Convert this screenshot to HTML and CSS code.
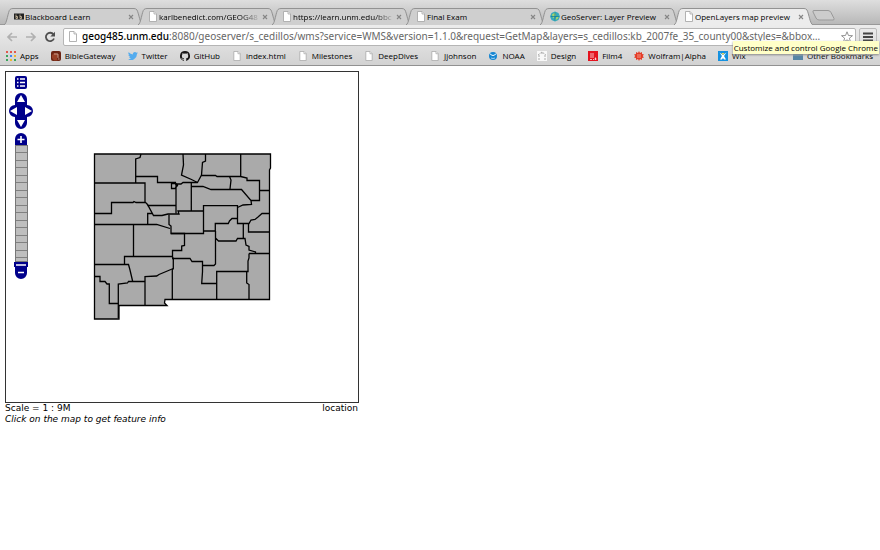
FILE: index.html
```html
<!DOCTYPE html>
<html lang="en">
<head>
<meta charset="utf-8">
<title>OpenLayers map preview</title>
<link rel="stylesheet" href="styles.css">
</head>
<body>
<svg class="defs" aria-hidden="true">
  <symbol id="page" viewBox="0 0 10 11"><path d="M1.5.5h4.5l2.500 2.500v7.500h-7z" fill="#fff" stroke="#aaa" stroke-width=".9"/><path d="M6 .5v2.500h2.500" fill="#eee" stroke="#aaa" stroke-width=".8"/></symbol>
  <symbol id="close" viewBox="0 0 6 6"><path d="M1 1l4 4M5 1l-4 4" stroke="#858585" stroke-width="1.100"/></symbol>
  <symbol id="tab" viewBox="0 0 139 17" preserveAspectRatio="none"><path d="M0 17C3 16 4 3 6 1.500Q7 .5 9 .5H130Q132 .5 133 2C135 6 136 16 139 17" stroke="#929292" stroke-width="1"/></symbol>
</svg>
<header class="browser">
  <nav class="tabs" aria-label="Tabs">
    <div class="tab"><svg class="shape"><use href="#tab"/></svg><svg class="icon" viewBox="0 0 10 10"><path d="M0 2h10v6H0z" fill="#222"/><path d="M2 3v4h1.500V5H2M6 3v4h1.500V5H6" fill="none" stroke="#d8c8a8" stroke-width=".8"/></svg><a href="#">Blackboard Learn</a><button aria-label="Close"><svg><use href="#close"/></svg></button></div>
    <div class="tab"><svg class="shape"><use href="#tab"/></svg><svg class="icon"><use href="#page"/></svg><a class="fade" href="#">karlbenedict.com/GEOG48</a><button aria-label="Close"><svg><use href="#close"/></svg></button></div>
    <div class="tab"><svg class="shape"><use href="#tab"/></svg><svg class="icon"><use href="#page"/></svg><a class="fade" href="#">https://learn.unm.edu/bbc</a><button aria-label="Close"><svg><use href="#close"/></svg></button></div>
    <div class="tab"><svg class="shape"><use href="#tab"/></svg><svg class="icon"><use href="#page"/></svg><a href="#">Final Exam</a><button aria-label="Close"><svg><use href="#close"/></svg></button></div>
    <div class="tab"><svg class="shape"><use href="#tab"/></svg><svg class="icon" viewBox="0 0 10 10"><path d="M5 0l3.500 1.500L10 5 8.500 8.500 5 10 1.500 8.500 0 5l1.500-3.500z" fill="#35a9bd"/><path d="M2 3l3-2 1 3-3 3zM6 6l3-2-1 3-3 2z" fill="#a5d46a"/><path d="M1 5h8M5 1v8" stroke="#177d9a" stroke-width=".8"/></svg><a href="#">GeoServer: Layer Preview</a><button aria-label="Close"><svg><use href="#close"/></svg></button></div>
    <div class="tab active"><svg class="shape"><use href="#tab"/></svg><svg class="icon"><use href="#page"/></svg><a href="#">OpenLayers map preview</a><button aria-label="Close"><svg><use href="#close"/></svg></button></div>
    <button class="newtab" aria-label="New tab"><svg viewBox="0 0 23 11"><path d="M2 .5h14q2 0 3 2l3 6q.5 1.500-1 1.500H7q-2 0-3-2L1 2q-.5-1.500 1-1.500z" fill="#ccc" stroke="#999"/></svg></button>
  </nav>
  <div class="toolbar">
    <button aria-label="Back"><svg viewBox="0 0 12 12"><path d="M11 6H2M6 2L2 6l4 4" fill="none" stroke="#b0b0b0" stroke-width="1.700"/></svg></button>
    <button aria-label="Forward"><svg viewBox="0 0 12 12"><path d="M1 6h9M6 2l4 4-4 4" fill="none" stroke="#b0b0b0" stroke-width="1.700"/></svg></button>
    <button aria-label="Reload"><svg viewBox="0 0 12 12"><path d="M9.500 3.500A4.200 4.200 0 1 0 10 7.500" fill="none" stroke="#505050" stroke-width="1.800"/><path d="M11 .8v4.700H6.300z" fill="#505050"/></svg></button>
    <div class="address">
      <svg class="icon"><use href="#page"/></svg>
      <a class="url" href="#"><b>geog485.unm.edu</b>:8080/geoserver/s_cedillos/wms?service=WMS&amp;version=1.1.0&amp;request=GetMap&amp;layers=s_cedillos:kb_2007fe_35_county00&amp;styles=&amp;bbox…</a>
      <button aria-label="Bookmark this page"><svg viewBox="0 0 12 12"><path d="M6 .8l1.500 3.700 4 .2-3.100 2.500 1.100 3.900L6 8.900l-3.500 2.200 1.100-3.900L.5 4.700l4-.2z" fill="#fff" stroke="#888" stroke-width=".9"/></svg></button>
    </div>
    <button class="menu" aria-label="Menu"><svg viewBox="0 0 10 10"><path d="M0 1.500h10M0 5h10M0 8.500h10" stroke="#444" stroke-width="2"/></svg></button>
    <div class="tooltip" role="tooltip">Customize and control Google Chrome</div>
  </div>
  <nav class="bookmarks" aria-label="Bookmarks">
    <a href="#"><svg class="icon" viewBox="0 0 10 10"><path d="M0 0h2v2H0zM4 0h2v2H4zM8 0h2v2H8z" fill="#e2574c"/><path d="M0 4h2v2H0zM8 8h2v2H8zM0 8h2v2H0z" fill="#3ba55c"/><path d="M4 4h2v2H4z" fill="#4285f4"/><path d="M8 4h2v2H8zM4 8h2v2H4z" fill="#efb72e"/></svg>Apps</a>
    <a href="#"><svg class="icon" viewBox="0 0 10 10"><rect width="10" height="10" rx="2" fill="#6d2413"/><path d="M3 9.500L1 7V4l2-2 3 .5L7.500 5 6 7l.5 2.500" fill="#984027"/><path d="M3 3h4v4M7 8h1.500" fill="none" stroke="#e1c5b8" stroke-width=".7"/></svg>BibleGateway</a>
    <a href="#"><svg class="icon" viewBox="0 0 24 24"><path d="M24 4.600a10 10 0 0 1-2.800.8 5 5 0 0 0 2.100-2.700c-1 .6-2 1-3.100 1.200a4.900 4.900 0 0 0-8.400 4.500A14 14 0 0 1 1.700 3.200a4.900 4.900 0 0 0 1.500 6.500 5 5 0 0 1-2.200-.6 5 5 0 0 0 3.900 4.900 5 5 0 0 1-2.200.1 5 5 0 0 0 4.600 3.400A10 10 0 0 1 0 19.500 14 14 0 0 0 21.500 7.100z" fill="#55acee"/></svg>Twitter</a>
    <a href="#"><svg class="icon" viewBox="0 0 24 24"><path d="M12 .3a12 12 0 0 0-3.800 23.400c.6.100.8-.3.800-.6v-2c-3.300.7-4-1.600-4-1.600-.5-1.400-1.300-1.800-1.300-1.800-1.100-.7.100-.7.100-.7 1.200.1 1.800 1.200 1.800 1.200 1.100 1.900 2.900 1.300 3.600 1 .1-.8.400-1.300.8-1.600-2.700-.3-5.500-1.300-5.500-5.900 0-1.300.5-2.400 1.200-3.200-.1-.3-.5-1.500.1-3.200 0 0 1-.3 3.300 1.200a12 12 0 0 1 6 0c2.300-1.500 3.300-1.200 3.300-1.200.7 1.700.2 2.900.1 3.200.8.8 1.200 1.900 1.200 3.200 0 4.600-2.800 5.600-5.500 5.900.4.400.8 1.100.8 2.200v3.300c0 .3.200.7.800.6A12 12 0 0 0 12 .3" fill="#191717"/></svg>GitHub</a>
    <a href="#"><svg class="icon"><use href="#page"/></svg>index.html</a>
    <a href="#"><svg class="icon"><use href="#page"/></svg>Milestones</a>
    <a href="#"><svg class="icon"><use href="#page"/></svg>DeepDives</a>
    <a href="#"><svg class="icon"><use href="#page"/></svg>Jjohnson</a>
    <a href="#"><svg class="icon" viewBox="0 0 10 10"><circle cx="5" cy="5" r="4" fill="#1686d2"/><path d="M2 2.500q1 2 3 2t3-2" fill="none" stroke="#fff"/><path d="M3 7q2 1 4 0" fill="none" stroke="#bfe3f8" stroke-width=".8"/></svg>NOAA</a>
    <a href="#"><svg class="icon" viewBox="0 0 10 10"><path d="M0 0h10v10H0z" fill="#f8f8f8"/><path d="M1 4l4-3 4 3M2 4v5M8 4v5M4 2h2" fill="none" stroke="#aaa" stroke-dasharray="2 1"/></svg>Design</a>
    <a href="#"><svg class="icon" viewBox="0 0 10 10"><path d="M0 0h10v10H0z" fill="#e4131f"/><path d="M3 2v5M5 2v5M2 8.500h2M5 8.500h1M7.500 6.500v2.500M6.500 8h2" stroke="#fff" stroke-width=".7"/></svg>Film4</a>
    <a href="#"><svg class="icon" viewBox="0 0 10 10"><path d="M5 0l1 2 2-1v2l2 .5L8.700 5l1.300 1.500L8 7v2L6 8l-1 2-1-2-2 1V7l-2-.5L1.300 5 0 3.500 2 3V1l2 1z" fill="#e43b26"/><path d="M3 4h4M3 6h4" stroke="#fac4b8" stroke-width=".7"/></svg>Wolfram|Alpha</a>
    <a href="#"><svg class="icon" viewBox="0 0 10 10"><path d="M0 0h10v10H0z" fill="#1491e0"/><path d="M1.500 1.500L4 5 2 8.500h2L5 7l1 1.500h2L6 5l2.500-3.500L5 4z" fill="#fff"/><path d="M3.500 2h3L5 4z" fill="#fbd543"/></svg>Wix</a>
    <a class="other" href="#"><svg class="icon" viewBox="0 0 10 10"><path d="M0 1.500h4l1 1h5V9H0z" fill="#5685a5"/><path d="M0 4h10" stroke="#83aac3"/></svg>Other Bookmarks</a>
  </nav>
</header>
<main class="preview">
  <div class="map">
    <svg class="counties" viewBox="6 72 352 330" role="img" aria-label="Counties of New Mexico">
      <path class="state" d="M94.500 154H270.500V168L269.500 170V299.500H165L164.500 303L167 305.500H119V319H94.500Z"/>
      <g class="lines">
        <path d="M135.700 182.500V159L140 157.500L141 154M94 183H145V202L147.500 204.500L153.500 215.500H162L168 214H179L178 211H203M135.700 176.500H157.500V182.500H176"/>
        <path d="M183 154L183.500 165L181.500 175L191.500 179.500L197.500 182.500L201.500 175L202.500 162.500L205.500 161V154M201.500 175.500H215.500L217 176.500H240.700L247 178V180.500H259.500V200.500H251M240.700 154V177M229.500 176.500L231 180L230 189M259.500 190.500H269"/>
        <path d="M175 184H181L183 182.500H197.500M171.500 183.500H176L177.500 185.500L175 188.500H171.500ZM176 183V213.500M191.300 182.500V211M191.500 186.500H203L211 189.500H241.500L251 200.500L251.500 204.500L243 205L237.500 207.500"/>
        <path d="M147.500 205.500H176M94 213.500H111.500V202.500H133L134 201.500L136 202.500H145M94 224.500H156.700L170 228.500M147.700 224V213.500H152M169 214.500V224.500L171 226V233.500H184.500V245.500L181.700 246V250.500H172.500V257L173.300 258.500V268.500L172.300 270V299M133.500 224V256"/>
        <path d="M171 233.500H203.500V205.700H237.500V223.500H249L251 220L255 219.500L258 217L262 213.500H269M203 231H215.300V223.500H228.300L229.500 221L232 218.500H237.500M243.300 223.500V238M248.500 223.500V232H269"/>
        <path d="M215.500 231V264L214 265.500H202.500M172 258.500H190L192 261.500H202.500V271.700L201.700 283.500H216.500M215.500 238L218.500 241H236L237.500 238.500H245L246 245L249 246.500V250L255.500 252V253.500M249 253.500H269M249 253.500V258L248 261V271.500H216.700V299M246.700 271.500V283L249 284.500V299"/>
        <path d="M94 264.500H128.500L130 270L132.700 281.500M124.500 264V256.500H172.500M94 276.500H100V281.500H105L107 284H109.300V303.500H118.500M118.300 318V284L127.500 283L128.500 281.500H145V305.500M145 281V276.500L156.700 276L159 274.500L173.300 268.500"/>
      </g>
    </svg>
    <div class="controls">
      <button aria-label="Layers"><svg width="12" height="13" viewBox="0 0 12 13"><rect width="12" height="13" rx="2" fill="#00008b"/><path d="M2 3h1.500M2 6.500h1.500M2 10h1.500M5 3h5M5 6.500h5M5 10h5" stroke="#fff" stroke-width="1.600"/></svg></button>
      <button class="pan" aria-label="Pan"><svg width="26" height="38" viewBox="0 0 26 38"><path d="M7 7a6 6 0 0 1 12 0v6a6 6 0 0 1 0 12v6a6 6 0 0 1-12 0v-6a6 6 0 0 1 0-12z" fill="#00008b"/><path d="M13 3l4 7H9zM13 35l4-7H9zM2 19l7-4v8zM24 19l-7-4v8z" fill="#fff"/></svg></button>
      <button aria-label="Zoom in"><svg width="12" height="12" viewBox="0 0 12 12"><path d="M0 12V6a6 6 0 0 1 12 0v6z" fill="#00008b"/><path d="M2.500 6.500h7M6 3v7" stroke="#fff" stroke-width="1.600"/></svg></button>
      <div class="scale"></div>
      <button aria-label="Zoom out"><svg width="14" height="17" viewBox="0 0 14 17"><path d="M0 0h14v5h-1v6a6 6 0 0 1-12 0V5H0z" fill="#00008b"/><path d="M2 3h10M4 10.500h6" stroke="#fff" stroke-width="1.600"/></svg></button>
    </div>
  </div>
  <div class="status"><span>Scale = 1 : 9M</span><span>location</span></div>
  <p class="hint">Click on the map to get feature info</p>
</main>
</body>
</html>
```

FILE: styles.css
```css
* { box-sizing: border-box; }
body { margin: 0; background: #fff; color: #000; font: 9px/11px "DejaVu Sans", sans-serif; }
a { color: inherit; text-decoration: none; }
button { display: block; padding: 0; border: 0; background: none; flex: none; }
svg { display: block; }
.defs { position: absolute; width: 0; height: 0; }
.icon { width: 10px; height: 11px; flex: none; }

.browser { background: #dcdcdc; font-family: "Open Sans", sans-serif; font-size: 8px; border-bottom: 1px solid #919191; }
.tabs { display: flex; align-items: flex-end; height: 25px; padding: 0 42px 0 4px; background: linear-gradient(#dedede, #b8b8b8); border-bottom: 1px solid #999; }
.tab { position: relative; display: flex; align-items: center; gap: 1px; flex: 0 1 139px; min-width: 0; height: 17px; margin-right: -5px; margin-bottom: -1px; padding: 0 9px 0 10px; }
.tab .shape { position: absolute; inset: 0; width: 100%; height: 100%; fill: #cfcfcf; }
.tab.active { z-index: 1; }
.tab.active .shape { fill: #ececec; }
.tab .icon, .tab a, .tab button { position: relative; }
.tab a { flex: 1; min-width: 0; overflow: hidden; white-space: nowrap; }
.tab .fade { mask-image: linear-gradient(to right, #000 80%, transparent); }
.tab button svg { width: 6px; height: 6px; }
.newtab { margin: 0 0 3px 4px; }
.newtab svg { width: 23px; height: 11px; }

.toolbar { position: relative; display: flex; align-items: center; gap: 7px; height: 21px; padding: 2px 3px 0 6px; background: linear-gradient(#ececec, #dedede); }
.toolbar > button svg { width: 12px; height: 12px; }
.address { display: flex; align-items: center; gap: 4px; flex: 1; min-width: 0; height: 18px; padding: 0 2px 0 4px; background: #fff; border: 1px solid #b5b5b5; border-radius: 2px; }
.address button svg { width: 12px; height: 12px; }
.url { flex: 1; min-width: 0; overflow: hidden; white-space: nowrap; color: #666; font-family: "Noto Sans", sans-serif; font-size: 10px; line-height: 15px; }
.url b { color: #000; font-weight: 500; }
.toolbar > .menu { display: grid; place-items: center; width: 18px; height: 18px; margin-left: -4px; border: 1px solid #bbb; border-radius: 2px; }
.toolbar > .menu svg { width: 10px; height: 10px; }
.tooltip { position: absolute; right: 1px; top: 16px; padding: 0 1px; background: #ffffc8; color: #000; line-height: 13px; box-shadow: 0 1px 2px #888; white-space: nowrap; }

.bookmarks { display: flex; align-items: center; gap: 12px; height: 19px; padding: 0 7px 0 6px; background: linear-gradient(#dedede, #d2d2d2); }
.bookmarks a { display: flex; align-items: center; gap: 4px; white-space: nowrap; }
.bookmarks .icon { height: 10px; }
.bookmarks .other { margin-left: auto; }

.preview { max-width: 365px; padding: 5px 6px 5px 5px; }
.map { position: relative; border: 1px solid #333; }
.counties { width: 100%; height: auto; }
.state { fill: #aaa; stroke: #000; stroke-width: 1.300; }
.lines { fill: none; stroke: #000; stroke-width: 1.300; }
.controls { position: absolute; left: 2px; top: 4px; display: flex; flex-direction: column; align-items: center; width: 26px; }
.pan { margin: 3px 0; }
.scale { width: 13px; height: 117px; border: 1px solid #777; background: repeating-linear-gradient(#bebebe 0 5.6%, #808080 5.6% 6.5%); }
.status { display: flex; justify-content: space-between; padding-right: 1px; }
.hint { margin: 0; font-style: italic; }
```
